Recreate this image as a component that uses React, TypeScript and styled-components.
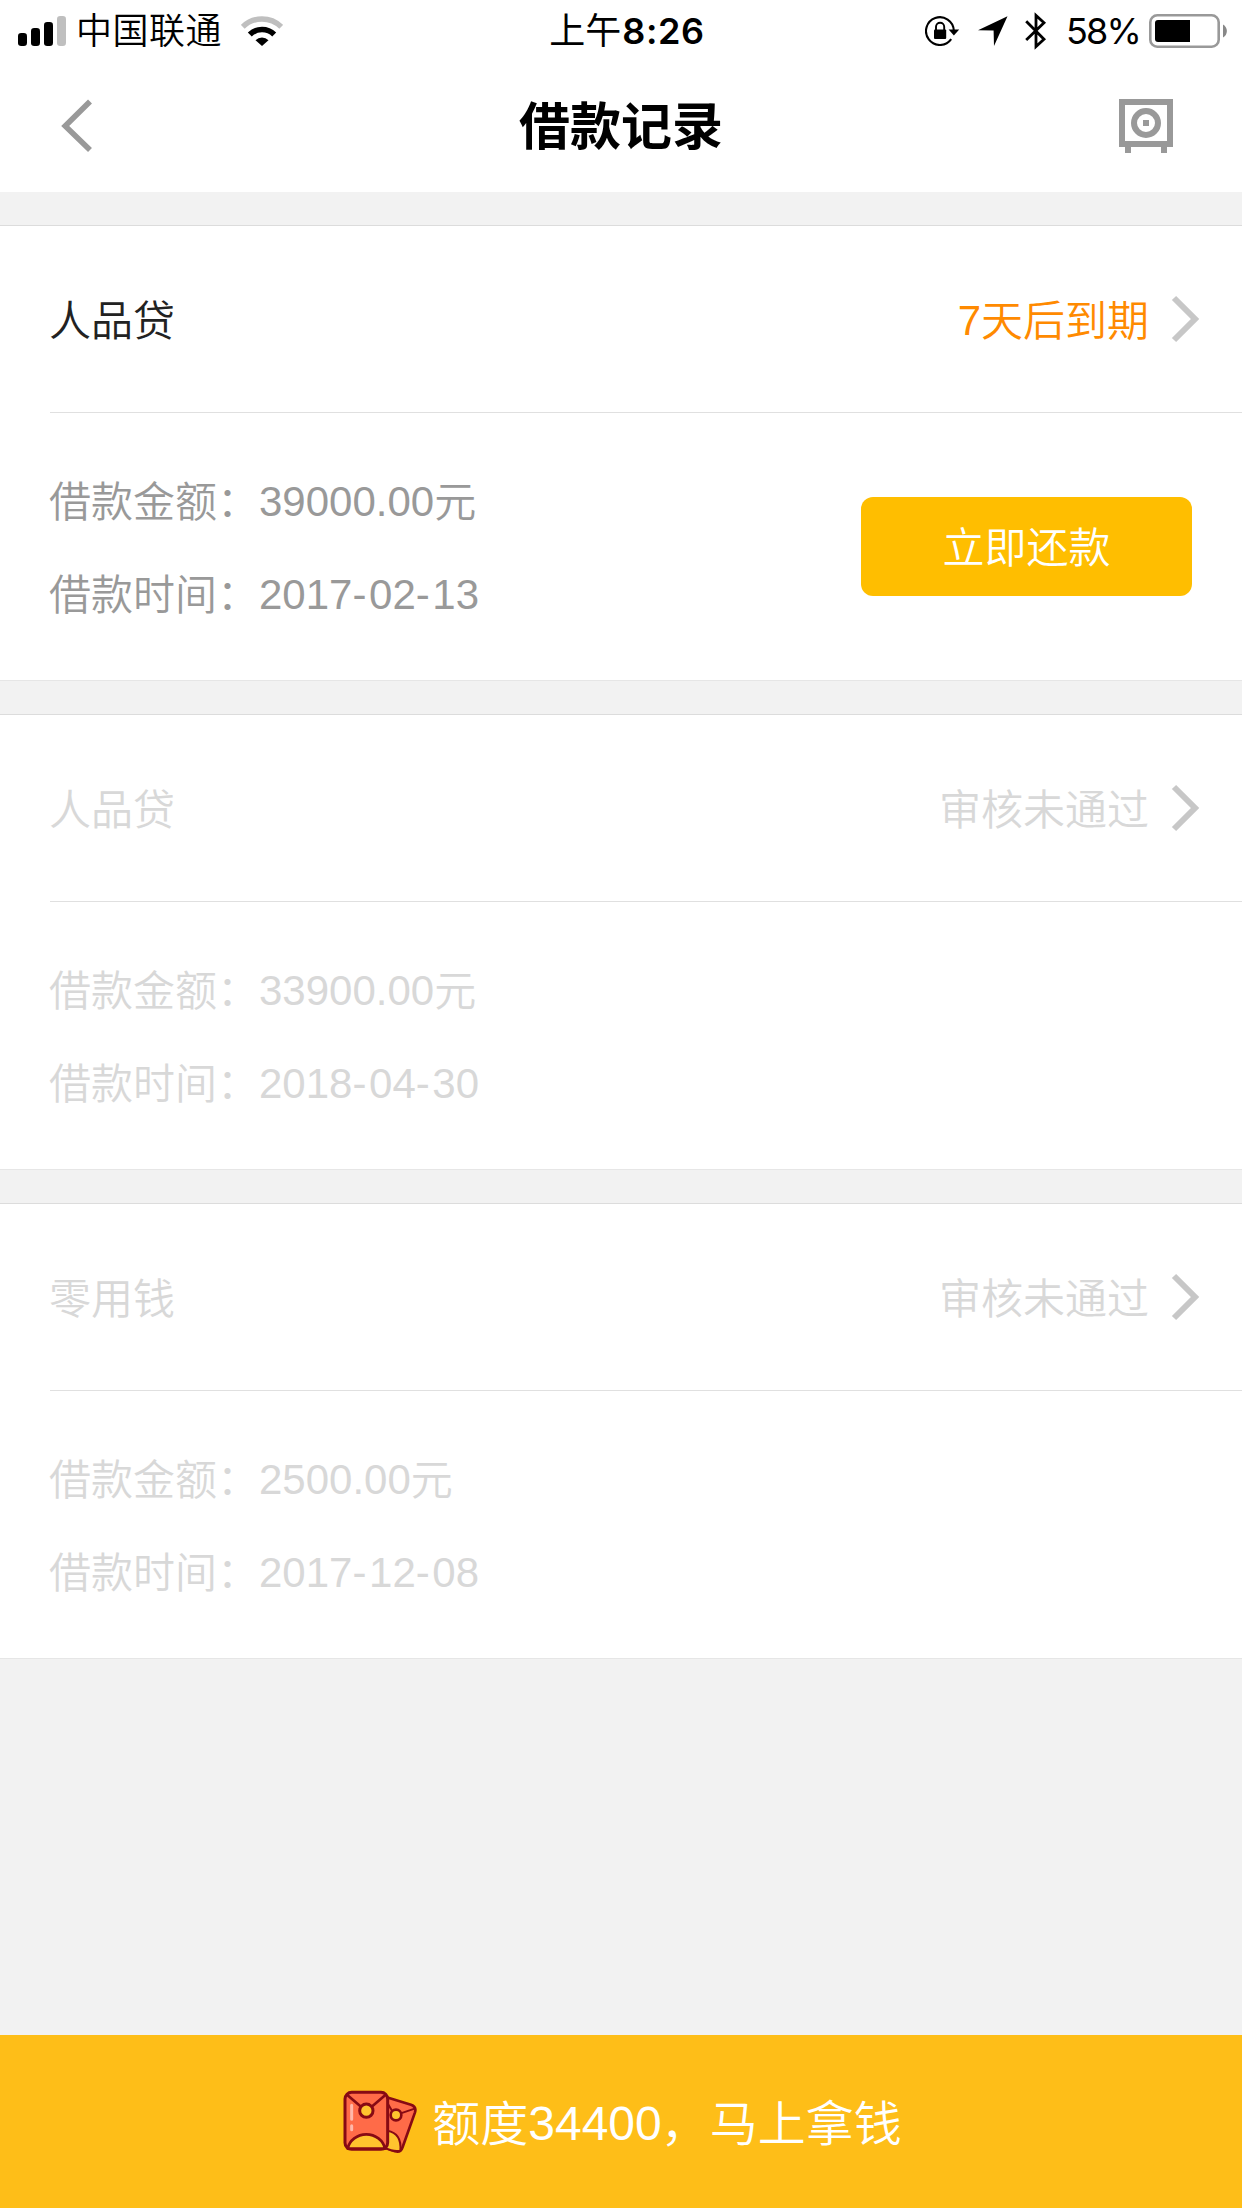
import React from "react";
import styled, { createGlobalStyle } from "styled-components";

const GlobalStyle = createGlobalStyle`
  * { box-sizing: border-box; }
  html, body { margin: 0; padding: 0; background: #f2f2f2; }
  body {
    font-family: "Liberation Sans", "Noto Sans CJK SC", sans-serif;
    -webkit-font-smoothing: antialiased;
  }
`;

const Screen = styled.div`
  width: 1242px;
  height: 2208px;
  display: flex;
  flex-direction: column;
  background: #f2f2f2;
  overflow: hidden;
`;

const Top = styled.header`
  height: 192px;
  flex: none;
  background: #fff;
`;

const StatusBar = styled.div`
  height: 60px;
  display: grid;
  grid-template-columns: 1fr auto 1fr;
  align-items: center;
  padding: 0 14px 0 18px;
  font-family: Inter, "Noto Sans CJK SC", sans-serif;
  font-size: 36px;
  line-height: 60px;
  color: #000;
`;

const StatusLeft = styled.div`
  display: flex;
  align-items: center;
`;

const StatusRight = styled.div`
  display: flex;
  align-items: center;
  justify-content: flex-end;
`;

const Carrier = styled.span`
  margin: 1px 19px 0 10px;
  font-weight: 350;
  letter-spacing: 0.5px;
`;

const Clock = styled.span`
  padding: 1px 0 0 8px;
  font-weight: 400;
`;

const ClockDigits = styled.span`
  margin-left: 1px;
  font-weight: 600;
  letter-spacing: 0.6px;
`;

const BatteryPercent = styled.span`
  margin: 1px 9px 0 19px;
  letter-spacing: -1.8px;
`;

const NavBar = styled.nav`
  height: 132px;
  display: grid;
  grid-template-columns: 1fr auto 1fr;
  align-items: center;
  padding: 0 60px;
`;

const NavTitle = styled.h1`
  margin: 0;
  padding: 4px 0 0;
  font-size: 51px;
  line-height: 128px;
  font-weight: 700;
  color: #000;
`;

const NavAction = styled.div<{ $end?: boolean }>`
  display: flex;
  justify-content: ${(p) => (p.$end ? "flex-end" : "flex-start")};
  padding-right: ${(p) => (p.$end ? "9px" : "0")};
`;

const List = styled.main`
  flex: 1;
  display: flex;
  flex-direction: column;
  gap: 33px;
  padding-top: 33px;
`;

const Card = styled.section`
  height: 456px;
  flex: none;
  background: #fff;
  border-top: 1px solid #dcdcdc;
  border-bottom: 1px solid #e6e6e6;
`;

const CardHead = styled.div`
  height: 187px;
  margin-left: 50px;
  padding-right: 41px;
  display: flex;
  align-items: center;
  border-bottom: 1px solid #e0e0e0;
  font-size: 42px;
  line-height: 60px;
  font-weight: 350;
`;

const LoanName = styled.span<{ $muted: boolean }>`
  flex: 1;
  margin-left: -1px;
  padding-top: 6px;
  color: ${(p) => (p.$muted ? "#d8d8d8" : "#222")};
`;

const LoanStatus = styled.span<{ $muted: boolean }>`
  margin-right: 22px;
  padding-top: 6px;
  color: ${(p) => (p.$muted ? "#d8d8d8" : "#ff8a00")};
`;

const CardBody = styled.div`
  height: 267px;
  display: flex;
  align-items: center;
  justify-content: space-between;
  padding: 0 50px 0 49px;
`;

const Facts = styled.div<{ $muted: boolean }>`
  display: flex;
  flex-direction: column;
  gap: 33px;
  padding-top: 6px;
  font-size: 42px;
  line-height: 60px;
  font-weight: 350;
  color: ${(p) => (p.$muted ? "#d8d8d8" : "#999")};
`;

const Fact = styled.div`
  white-space: nowrap;
`;

const Numeric = styled.span`
  line-height: 1;
  vertical-align: 1px;
`;

const Mark = styled.span<{ $pull: number }>`
  margin: 0 ${(p) => p.$pull}px 0 -${(p) => p.$pull}px;
`;

const Dash = styled.span`
  letter-spacing: 2.6px;
`;

const RepayButton = styled.button`
  width: 331px;
  height: 99px;
  padding: 4px 0 0;
  border: 0;
  border-radius: 12px;
  background: #ffbe00;
  color: #fff;
  font: inherit;
  font-size: 42px;
  font-weight: 350;
  line-height: 95px;
`;

const Footer = styled.footer`
  height: 173px;
  flex: none;
  display: flex;
  align-items: center;
  justify-content: center;
  gap: 14px;
  padding-left: 3px;
  background: #febe18;
  color: #fff;
  font-size: 48px;
  line-height: 70px;
  font-weight: 350;
`;

const FooterLabel = styled.span`
  padding-top: 6px;
`;

const SignalIcon = () => (
  <svg width="48" height="30" viewBox="0 0 48 30">
    <rect x="0" y="17" width="9" height="13" rx="3.2" />
    <rect x="13" y="12" width="9" height="18" rx="3.2" />
    <rect x="26" y="6" width="9" height="24" rx="3.2" />
    <rect x="39" y="0" width="9" height="30" rx="3.2" fill="#bfbfbf" />
  </svg>
);

const WifiIcon = () => (
  <svg width="42" height="30" viewBox="0 0 42 30">
    <path d="M1.8 10.8a27.5 27.5 0 0 1 38.4 0" fill="none" stroke="#bfbfbf" strokeWidth="5.4" />
    <path d="M8.8 18.6a17.3 17.3 0 0 1 24.4 0" fill="none" stroke="#000" strokeWidth="5.6" />
    <path d="M14.5 24.2a9.2 9.2 0 0 1 13 0L21 30Z" />
  </svg>
);

const RotationLockIcon = () => (
  <svg width="35" height="30" viewBox="0 0 35 30">
    <path d="M26.2 23.2A13.9 13.9 0 1 1 28.8 14.5" fill="none" stroke="#000" strokeWidth="2.1" />
    <path d="M23.6 13.6h10.6l-5.3 5.8Z" />
    <rect x="9" y="13.5" width="12.2" height="9.5" rx="1" />
    <path d="M11 14v-3.2a4.1 4.1 0 0 1 8.2 0V14" fill="none" stroke="#000" strokeWidth="1.9" />
  </svg>
);

const LocationIcon = () => (
  <svg width="30" height="30" viewBox="0 0 30 30" style={{ marginLeft: 18 }}>
    <path d="M29.5 .3 16 30 15.6 14.4 0 14.2Z" />
  </svg>
);

const BluetoothIcon = () => (
  <svg width="22" height="38" viewBox="0 0 22 38" style={{ marginLeft: 17 }}>
    <path
      d="M1.2 9.3 19 27.2 11 34.6V3.4l8 7.4L1.2 28"
      fill="none"
      stroke="#000"
      strokeWidth="2.8"
      strokeMiterlimit="8"
    />
  </svg>
);

const BatteryIcon = () => (
  <svg width="79" height="34" viewBox="0 0 79 34">
    <rect x="1.3" y="1.3" width="68.4" height="31.4" rx="7" fill="none" stroke="#999" strokeWidth="2.6" />
    <path d="M9 6h32v22H9a3 3 0 0 1-3-3V9a3 3 0 0 1 3-3Z" />
    <path d="M74 10.5c5.2 3 5.2 10 0 13Z" fill="#888" />
  </svg>
);

const BackIcon = () => (
  <svg width="34" height="54" viewBox="0 0 34 54">
    <path d="M30 2.5 5.2 27 30 51" fill="none" stroke="#999" strokeWidth="5.6" />
  </svg>
);

const SafeIcon = () => (
  <svg width="54" height="54" viewBox="0 0 54 54">
    <rect x="3" y="3" width="48" height="42" fill="none" stroke="#999" strokeWidth="6" />
    <circle cx="27" cy="24" r="12" fill="none" stroke="#999" strokeWidth="6" />
    <path d="M24 21h6v6h-6ZM6 48h6v6H6ZM42 48h6v6h-6Z" fill="#999" />
  </svg>
);

const ForwardIcon = () => (
  <svg width="30" height="48" viewBox="0 0 30 48">
    <path d="M3 3 24 24 3 45" fill="none" stroke="#c7c7c7" strokeWidth="6" />
  </svg>
);

const EnvelopesIcon = () => (
  <svg width="75" height="64" viewBox="39 62 225 192">
    <g stroke="#870a14" strokeWidth="8" strokeLinejoin="round">
      <path d="M165 82 243 106q17 6 12 23l-37 104q-6 18-23 13l-40-14Z" fill="#ff6b48" />
      <path d="M172 184q44 8 39 60-20 5-46-9Z" fill="#ffc42e" strokeWidth="6" />
      <path d="M174 104l12 20M212 132l42-14" fill="none" strokeWidth="6" />
      <circle cx="198" cy="137" r="16" fill="#ffc42e" />
      <rect x="45" y="69" width="128" height="171" rx="20" fill="#ff6b48" strokeWidth="9" />
      <path d="M53 238a57 53 0 0 1 112 0Z" fill="#ffc42e" />
      <path d="M51 76 93 112M167 76l-42 36" fill="none" />
      <circle cx="109" cy="124" r="20" fill="#ffc42e" strokeWidth="9" />
    </g>
    <path d="M65 108v42M65 169v12" stroke="#ffb8aa" strokeWidth="9" strokeLinecap="round" />
  </svg>
);

interface Loan {
  name: string;
  daysLeft?: number;
  status: string;
  amount: string;
  date: string;
  active: boolean;
}

const loans: Loan[] = [
  { name: "人品贷", daysLeft: 7, status: "天后到期", amount: "39000.00", date: "2017-02-13", active: true },
  { name: "人品贷", status: "审核未通过", amount: "33900.00", date: "2018-04-30", active: false },
  { name: "零用钱", status: "审核未通过", amount: "2500.00", date: "2017-12-08", active: false },
];

const LoanDate = ({ value }: { value: string }) => (
  <Numeric>
    {value.split("-").map((part, i) => (
      <React.Fragment key={i}>
        {i > 0 && <Dash>-</Dash>}
        {part}
      </React.Fragment>
    ))}
  </Numeric>
);

const LoanCard = ({ loan }: { loan: Loan }) => (
  <Card>
    <CardHead>
      <LoanName $muted={!loan.active}>{loan.name}</LoanName>
      <LoanStatus $muted={!loan.active}>
        {loan.daysLeft !== undefined && <Numeric>{loan.daysLeft}</Numeric>}
        {loan.status}
      </LoanStatus>
      <ForwardIcon />
    </CardHead>
    <CardBody>
      <Facts $muted={!loan.active}>
        <Fact>
          借款金额：
          <Numeric>{loan.amount}</Numeric>元
        </Fact>
        <Fact>
          借款时间：
          <LoanDate value={loan.date} />
        </Fact>
      </Facts>
      {loan.active && <RepayButton>立即还款</RepayButton>}
    </CardBody>
  </Card>
);

export default function App() {
  return (
    <Screen lang="zh-CN">
      <GlobalStyle />
      <Top>
        <StatusBar>
          <StatusLeft>
            <SignalIcon />
            <Carrier>中国联通</Carrier>
            <WifiIcon />
          </StatusLeft>
          <Clock>
            上午<ClockDigits>8:26</ClockDigits>
          </Clock>
          <StatusRight>
            <RotationLockIcon />
            <LocationIcon />
            <BluetoothIcon />
            <BatteryPercent>58%</BatteryPercent>
            <BatteryIcon />
          </StatusRight>
        </StatusBar>
        <NavBar>
          <NavAction>
            <BackIcon />
          </NavAction>
          <NavTitle>借款记录</NavTitle>
          <NavAction $end>
            <SafeIcon />
          </NavAction>
        </NavBar>
      </Top>
      <List>
        {loans.map((loan, i) => (
          <LoanCard key={i} loan={loan} />
        ))}
      </List>
      <Footer>
        <EnvelopesIcon />
        <FooterLabel>
          额度<Numeric>34400</Numeric>
          <Mark $pull={1}>，</Mark>马上拿钱
        </FooterLabel>
      </Footer>
    </Screen>
  );
}
